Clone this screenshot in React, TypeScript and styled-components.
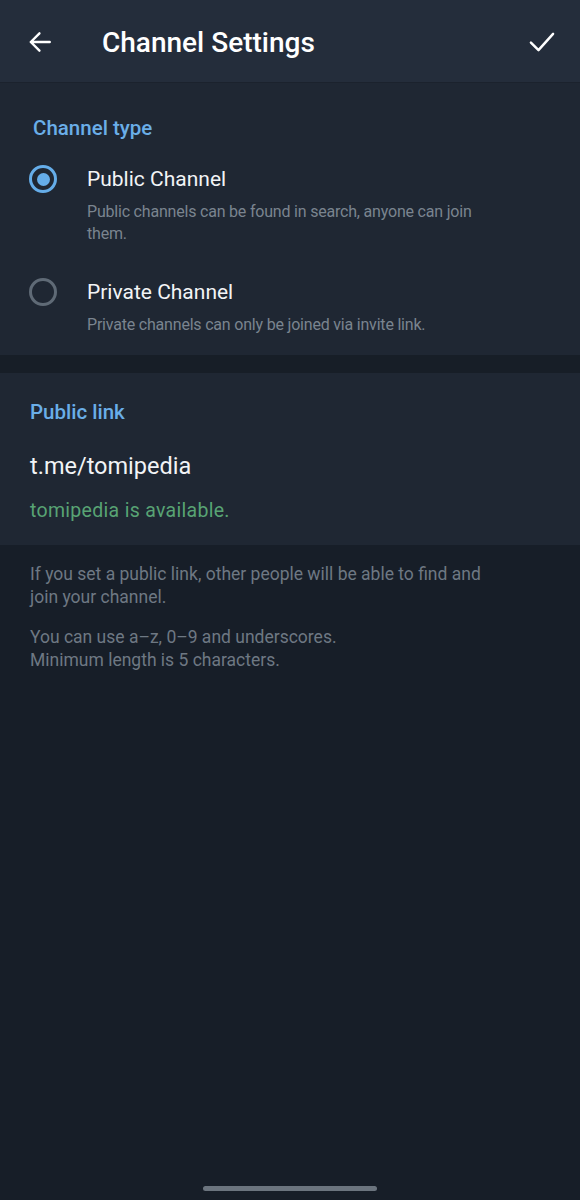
import React from "react";
import styled, { createGlobalStyle } from "styled-components";

const GlobalStyle = createGlobalStyle`
  html, body {
    margin: 0;
    padding: 0;
    background: #171e28;
  }
  * {
    box-sizing: border-box;
  }
`;

const App: React.FC = () => (
  <Screen>
    <GlobalStyle />
    <Header>
      <IconButton aria-label="Back">
        <svg width="26" height="26" viewBox="0 0 24 24" fill="none" stroke="#fff" strokeWidth="2.2" strokeLinecap="round" strokeLinejoin="round">
          <path d="M21 12H3.5M11.5 4L3.5 12l8 8" />
        </svg>
      </IconButton>
      <Title>Channel Settings</Title>
      <IconButton aria-label="Save" $right>
        <svg width="28" height="28" viewBox="0 0 24 24" fill="none" stroke="#fff" strokeWidth="2.1" strokeLinecap="round" strokeLinejoin="round">
          <path d="M2.5 12.5l6.5 6.5L21.5 5" />
        </svg>
      </IconButton>
    </Header>

    <Section $padTop={33} $padBottom={19}>
      <SectionTitle $indent={33}>Channel type</SectionTitle>
      <OptionRow>
        <Radio $checked />
        <OptionText>
          <OptionLabel>Public Channel</OptionLabel>
          <OptionHint>
            Public channels can be found in search, anyone can join them.
          </OptionHint>
        </OptionText>
      </OptionRow>
      <OptionRow>
        <Radio />
        <OptionText>
          <OptionLabel>Private Channel</OptionLabel>
          <OptionHint>Private channels can only be joined via invite link.</OptionHint>
        </OptionText>
      </OptionRow>
    </Section>

    <Divider />

    <Section $padTop={27} $padBottom={22}>
      <SectionTitle $indent={30}>Public link</SectionTitle>
      <LinkValue>t.me/tomipedia</LinkValue>
      <Available>tomipedia is available.</Available>
    </Section>

    <Footer>
      <FootNote>
        If you set a public link, other people will be able to find and join your channel.
      </FootNote>
      <FootNote>
        You can use a–z, 0–9 and underscores.
        <br />
        Minimum length is 5 characters.
      </FootNote>
    </Footer>

    <HomeBar />
  </Screen>
);

const Screen = styled.div`
  width: 580px;
  height: 1200px;
  background: #171e28;
  display: flex;
  flex-direction: column;
  font-family: Roboto, "Noto Sans", sans-serif;
  overflow: hidden;
`;

const Header = styled.header`
  height: 83px;
  background: #242d3b;
  display: flex;
  align-items: center;
  padding: 2px 20px 0 20px;
  border-bottom: 1px solid #1b222d;
`;

const IconButton = styled.div<{ $right?: boolean }>`
  width: 40px;
  height: 40px;
  display: flex;
  align-items: center;
  justify-content: center;
  margin-left: ${(p) => (p.$right ? "auto" : "0")};
  margin-right: ${(p) => (p.$right ? "-2px" : "0")};
`;

const Title = styled.h1`
  margin: 0 0 0 42px;
  font-size: 28px;
  font-weight: 500;
  color: #ffffff;
`;

const Section = styled.section<{ $padTop: number; $padBottom: number }>`
  background: #1f2733;
  padding: ${(p) => p.$padTop}px 0 ${(p) => p.$padBottom}px;
`;

const SectionTitle = styled.div<{ $indent: number }>`
  padding-left: ${(p) => p.$indent}px;
  font-size: 20.5px;
  font-weight: 500;
  color: #6aaee8;
  line-height: 24px;
`;

const OptionRow = styled.div`
  display: flex;
  align-items: flex-start;
  padding: 0 90px 0 29px;
  margin-top: 25px;
  & + & {
    margin-top: 33px;
  }
`;

const Radio = styled.div<{ $checked?: boolean }>`
  flex: none;
  width: 28px;
  height: 28px;
  border-radius: 50%;
  border: 3px solid ${(p) => (p.$checked ? "#65ade9" : "#5f6a76")};
  display: flex;
  align-items: center;
  justify-content: center;
  &::after {
    content: "";
    width: 13px;
    height: 13px;
    border-radius: 50%;
    background: #65ade9;
    display: ${(p) => (p.$checked ? "block" : "none")};
  }
`;

const OptionText = styled.div`
  margin-left: 30px;
  display: flex;
  flex-direction: column;
`;

const OptionLabel = styled.div`
  font-size: 21px;
  line-height: 28px;
  color: #f2f4f6;
`;

const OptionHint = styled.div`
  font-size: 16px;
  line-height: 22px;
  color: #7a848f;
  margin-top: 8px;
  letter-spacing: -0.2px;
`;

const Divider = styled.div`
  height: 18px;
  background: #171e27;
`;

const LinkValue = styled.div`
  padding-left: 30px;
  margin-top: 27px;
  font-size: 23.5px;
  line-height: 30px;
  color: #f2f4f6;
`;

const Available = styled.div`
  padding-left: 30px;
  margin-top: 18px;
  font-size: 19.5px;
  line-height: 24px;
  color: #58a374;
  letter-spacing: 0.3px;
`;

const Footer = styled.div`
  flex: 1;
  padding: 18px 90px 0 30px;
  display: flex;
  flex-direction: column;
  gap: 17px;
`;

const FootNote = styled.p`
  margin: 0;
  font-size: 17.5px;
  line-height: 23px;
  color: #6e7883;
`;

const HomeBar = styled.div`
  align-self: center;
  width: 174px;
  height: 5px;
  border-radius: 3px;
  background: #6b747e;
  margin-bottom: 9px;
`;

export default App;
